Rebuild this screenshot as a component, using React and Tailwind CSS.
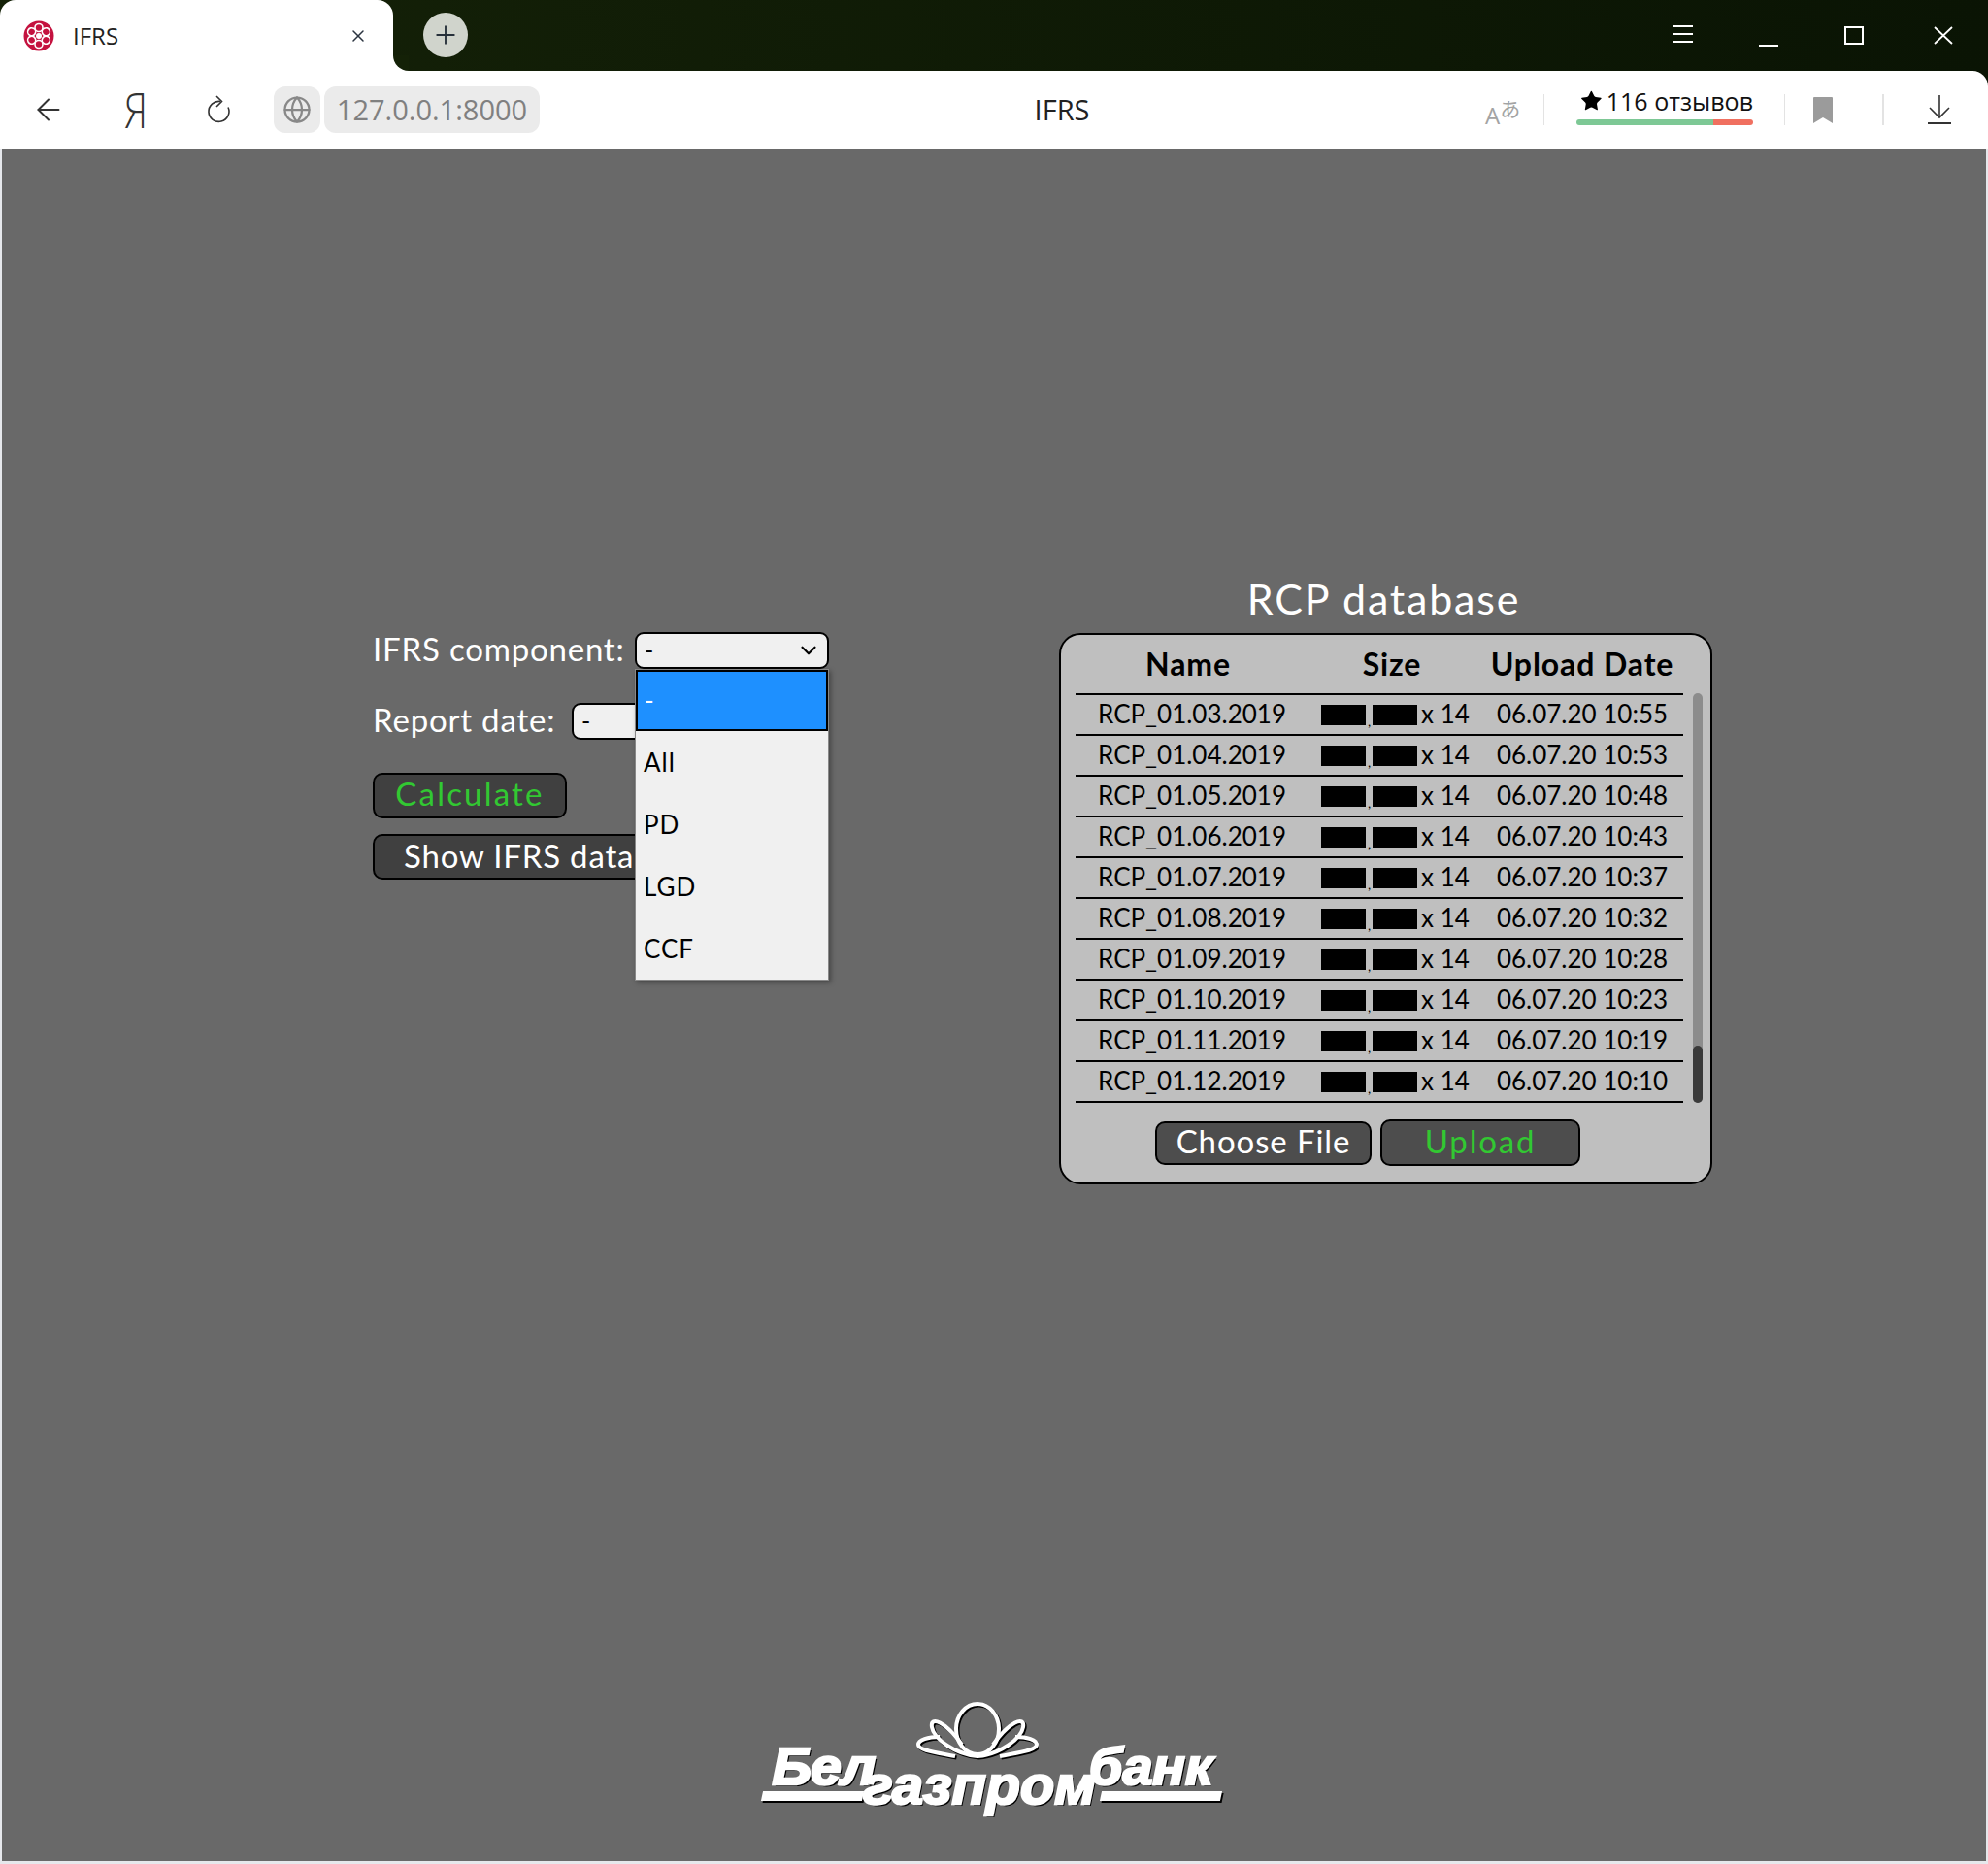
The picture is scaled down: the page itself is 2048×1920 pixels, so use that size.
import React from 'react';
import { ArrowLeft, ChevronDown, Globe, Plus, Star, X } from 'lucide-react';

const rows = [
  ['RCP_01.03.2019', '06.07.20 10:55'],
  ['RCP_01.04.2019', '06.07.20 10:53'],
  ['RCP_01.05.2019', '06.07.20 10:48'],
  ['RCP_01.06.2019', '06.07.20 10:43'],
  ['RCP_01.07.2019', '06.07.20 10:37'],
  ['RCP_01.08.2019', '06.07.20 10:32'],
  ['RCP_01.09.2019', '06.07.20 10:28'],
  ['RCP_01.10.2019', '06.07.20 10:23'],
  ['RCP_01.11.2019', '06.07.20 10:19'],
  ['RCP_01.12.2019', '06.07.20 10:10'],
];

const options = ['All', 'PD', 'LGD', 'CCF'];

function Favicon() {
  return (
    <svg width="32" height="32" viewBox="0 0 32 32">
      <circle cx="16" cy="16" r="15.5" fill="#c4123f" />
      {[0, 60, 120, 180, 240, 300].map((a) => (
        <circle key={a} cx="16" cy="7.5" r="4" fill="none" stroke="#fff" strokeWidth="1.6" transform={`rotate(${a} 16 16)`} />
      ))}
      <circle cx="16" cy="16" r="3" fill="#fff" />
    </svg>
  );
}

function TitleBar() {
  return (
    <div className="flex h-[73px] bg-gradient-to-r from-[#152208] to-[#0a1404]">
      <div className="flex w-[405px] items-center rounded-t-[16px] bg-white pl-[24px] pr-[26px]">
        <Favicon />
        <span className="ml-[19px] flex-1 text-[24px] text-[#222]">IFRS</span>
        <X size={20} strokeWidth={1.8} className="text-[#2b3440]" />
      </div>
      <div className="relative flex-1">
        {/* esquina arredondada por baixo do separador */}
        <div className="absolute bottom-0 left-0 h-[16px] w-[16px] bg-white">
          <div className="h-full w-full rounded-bl-[16px] bg-[#142107]" />
        </div>
        <div className="ml-[31px] mt-[13px] flex h-[46px] w-[46px] items-center justify-center rounded-full bg-[#d0d4cc]">
          <Plus size={30} strokeWidth={1.5} className="text-[#26303a]" />
        </div>
      </div>
      <div className="flex items-center pb-[1px]">
        <svg width="20" height="18" viewBox="0 0 20 18" className="mr-[68px] mb-[2px]">
          <path d="M0 1h20M0 9h20M0 17h20" stroke="#fff" strokeWidth="2" />
        </svg>
        <svg width="20" height="2" viewBox="0 0 20 2" className="mr-[68px] mt-[21px]">
          <path d="M0 1h20" stroke="#fff" strokeWidth="2" />
        </svg>
        <svg width="20" height="19" viewBox="0 0 20 19" className="mr-[72px]">
          <rect x="1" y="1" width="18" height="17" fill="none" stroke="#fff" strokeWidth="2" />
        </svg>
        <svg width="20" height="19" viewBox="0 0 20 19" className="mr-[36px]">
          <path d="M1 1l18 17M19 1L1 18" stroke="#fff" strokeWidth="1.8" />
        </svg>
      </div>
    </div>
  );
}

function ToolBar() {
  return (
    <div className="flex h-[80px] items-center rounded-tr-[16px] bg-white font-['Open_Sans',sans-serif]">
      <ArrowLeft size={36} strokeWidth={1.3} className="ml-[32px] text-[#333]" />
      <span className="ml-[60px] w-[24px] origin-left scale-x-[0.8] text-[50px] font-light leading-none text-[#333]">Я</span>
      <svg width="26" height="30" viewBox="0 0 26 30" className="ml-[60px]">
        <path d="M15 6.5a10.5 10.5 0 1 0 8 6" fill="none" stroke="#333" strokeWidth="1.6" />
        <path d="M11 1l5.5 5.5L11 12" fill="none" stroke="#333" strokeWidth="1.6" />
      </svg>
      <div className="ml-[44px] flex h-[48px] w-[48px] items-center justify-center rounded-[12px] bg-[#ebebeb]">
        <Globe size={30} strokeWidth={1.8} className="text-[#888]" />
      </div>
      <div className="ml-[4px] flex h-[48px] w-[222px] items-center justify-center rounded-[12px] bg-[#ebebeb] text-[29px] text-[#808080]">
        127.0.0.1:8000
      </div>
      <div className="ml-[480px] w-[116px] text-center text-[29px] text-[#222]">IFRS</div>
      <div className="ml-[378px] flex h-[36px] w-[36px] items-end text-[#a3a3a3]">
        <span className="text-[24px] leading-none">A</span>
        <span className="mb-[9px] font-['Noto_Sans_CJK_JP',sans-serif] text-[21px] leading-none">あ</span>
      </div>
      <div className="ml-[24px] h-[32px] w-[1px] bg-[#e3e3e3]" />
      <div className="mb-[9px] ml-[33px] flex w-[182px] flex-col">
        <div className="flex items-center pl-[3px] text-[25px] leading-[32px] text-[#111]">
          <Star size={28} fill="#000" strokeWidth={0} className="mr-[3px]" />
          <span className="whitespace-nowrap">116 отзывов</span>
        </div>
        <div className="mt-[3px] flex h-[6px] overflow-hidden rounded-[3px]">
          <div className="w-[141px] bg-[#7dc895]" />
          <div className="flex-1 bg-[#f07060]" />
        </div>
      </div>
      <div className="ml-[32px] h-[32px] w-[1px] bg-[#e3e3e3]" />
      <svg width="20" height="27" viewBox="0 0 20 27" className="ml-[29px]">
        <path d="M1 0h18a1 1 0 0 1 1 1v26l-10-6-10 6V1a1 1 0 0 1 1-1z" fill="#9b9b9b" />
      </svg>
      <div className="ml-[51px] h-[32px] w-[2px] bg-[#e3e3e3]" />
      <svg width="26" height="30" viewBox="0 0 26 30" className="ml-[44px]">
        <path d="M13 0v23M3 13l10 10 10-10" fill="none" stroke="#333" strokeWidth="1.6" />
        <path d="M1 29h24" stroke="#333" strokeWidth="2" />
      </svg>
    </div>
  );
}

function FormSelect({ width, chevron }) {
  return (
    <div className={`flex h-[38px] items-center justify-between rounded-[9px] border-2 border-black bg-[#f0f0f0] pl-[8px] pr-[6px] text-[25px] tracking-normal text-black ${width}`}>
      <span>-</span>
      {chevron && <ChevronDown size={26} strokeWidth={2} />}
    </div>
  );
}

function Dropdown() {
  return (
    <div className="absolute left-[270px] top-[38px] z-10 w-[200px] border border-[#888] bg-[#f0f0f0] text-[26px] tracking-[1px] text-black shadow-[2px_2px_5px_rgba(0,0,0,0.35)]">
      <div className="flex h-[63px] items-center border-2 border-black bg-[#1e90ff] pl-[7px] text-white">-</div>
      {options.map((o) => (
        <div key={o} className="flex h-[64px] items-center pl-[8px]">{o}</div>
      ))}
    </div>
  );
}

function FormColumn() {
  return (
    <div className="relative ml-[382px] mt-[58px] w-[707px] text-[33px] tracking-[0.8px] text-white">
      <div className="flex h-[38px] items-center">
        <span className="mb-[3px] w-[270px] whitespace-nowrap">IFRS component:</span>
        <FormSelect width="w-[200px]" chevron />
      </div>
      <div className="mt-[35px] flex h-[38px] items-center">
        <span className="mb-[3px] w-[205px] whitespace-nowrap">Report date:</span>
        <FormSelect width="w-[120px]" />
      </div>
      <Dropdown />
      <button className="mt-[34px] block h-[47px] w-[200px] rounded-[10px] border-2 border-black bg-[#404040] pb-[5px] leading-none tracking-[2.2px] text-[#32c832]">Calculate</button>
      <button className="mt-[16px] block h-[47px] w-[290px] rounded-[10px] border-2 border-black bg-[#404040] pb-[3px] pl-[30px] text-left leading-none">Show IFRS data</button>
    </div>
  );
}

function Database() {
  return (
    <div className="w-[673px]">
      <div className="h-[48px] pr-[4px] text-center text-[43px] leading-[48px] tracking-[1.8px] text-white">RCP database</div>
      <div className="mt-[11px] h-[568px] rounded-[22px] border-2 border-black bg-[#bfbfbf] pl-[15px] text-black">
        <div className="grid h-[60px] w-[626px] grid-cols-[240px_178px_208px] items-center text-center text-[32px] font-bold tracking-[0.9px]">
          <div className="pr-[8px]">Name</div>
          <div className="pr-[6px]">Size</div>
          <div className="whitespace-nowrap">Upload Date</div>
        </div>
        <div className="flex">
          <div className="w-[626px] border-b-2 border-black">
            {rows.map(([name, date]) => (
              <div key={name} className="grid h-[42px] grid-cols-[240px_178px_208px] items-center border-t-2 border-black pb-[4px] text-center text-[26px]">
                <div className="whitespace-nowrap">{name}</div>
                <div className="flex items-center justify-center whitespace-nowrap pl-[1px]">
                  <span className="mt-[1px] h-[21px] w-[46px] bg-black" />
                  <span className="mt-[14px] w-[7px] text-[14px] leading-none">,</span>
                  <span className="mt-[1px] h-[21px] w-[46px] bg-black" />
                  <span className="ml-[4px]">x 14</span>
                </div>
                <div className="whitespace-nowrap">{date}</div>
              </div>
            ))}
          </div>
          <div className="ml-[10px] flex h-[422px] w-[10px] flex-col justify-end rounded-full bg-[#8c8c8c]">
            <div className="h-[59px] rounded-full bg-[#3a3a3a]" />
          </div>
        </div>
        <div className="mt-[17px] flex items-center pl-[82px] text-[33px]">
          <button className="h-[45px] w-[223px] rounded-[10px] border-2 border-black bg-[#4d4d4d] pb-[4px] leading-none tracking-[0.9px] text-white">Choose File</button>
          <button className="ml-[9px] h-[48px] w-[206px] rounded-[10px] border-2 border-black bg-[#4d4d4d] pb-[4px] leading-none tracking-[1.8px] text-[#32c832]">Upload</button>
        </div>
      </div>
    </div>
  );
}

function Logo() {
  return (
    <div className="ml-[783px] w-[480px] select-none italic text-white">
      <svg width="126" height="62" viewBox="0 0 126 62" className="ml-[159px] block">
        <g fill="none" stroke="#000" strokeWidth="4" transform="translate(1.5 1.5)">
          <ellipse cx="63" cy="28" rx="22" ry="26" />
          <path d="M47 44C30 20 14 14 16 26c2 12 24 28 47 30 23-2 45-18 47-30 2-12-14-6-31 18" />
          <path d="M40 56C20 52 2 50 2 44c0-5 10-8 22-8M86 56c20-4 38-6 38-12 0-5-10-8-22-8" />
        </g>
        <g fill="none" stroke="#fff" strokeWidth="4">
          <ellipse cx="63" cy="28" rx="22" ry="26" />
          <path d="M47 44C30 20 14 14 16 26c2 12 24 28 47 30 23-2 45-18 47-30 2-12-14-6-31 18" />
          <path d="M40 56C20 52 2 50 2 44c0-5 10-8 22-8M86 56c20-4 38-6 38-12 0-5-10-8-22-8" />
        </g>
      </svg>
      <div className="-mt-[12px] flex font-['Liberation_Sans',sans-serif] font-bold [-webkit-text-stroke:2.5px_white] [text-shadow:2px_2px_0_#000]">
        <div className="w-[104px]">
          <div className="h-[42px] origin-left scale-x-[1.06] pl-[10px] text-[54px] leading-[32px] tracking-[-1px]">Бел</div>
          <div className="h-[10px] -skew-x-12 bg-white shadow-[2px_2px_0_#000]" />
        </div>
        <div className="mt-[19px] w-[233px] origin-left scale-x-[1.03] text-[56px] leading-[34px]">газпром</div>
        <div className="w-[136px]">
          <div className="h-[42px] origin-left scale-x-[1.03] text-[54px] leading-[32px]">банк</div>
          <div className="ml-[12px] h-[10px] -skew-x-12 bg-white shadow-[2px_2px_0_#000]" />
        </div>
      </div>
    </div>
  );
}

export default function App() {
  return (
    <div className="flex h-[1920px] w-[2048px] flex-col overflow-hidden bg-[#e6e8ec] font-['Lato',sans-serif]">
      <div className="bg-white font-['Open_Sans',sans-serif]">
        <TitleBar />
      </div>
      <div className="bg-gradient-to-r from-[#152208] to-[#0a1404]">
        <ToolBar />
      </div>
      <main className="mx-[2px] mb-[3px] flex flex-1 flex-col bg-[#696969] pt-[440px]">
        <div className="flex items-start">
          <FormColumn />
          <Database />
        </div>
        <div className="mt-auto pb-[61px]">
          <Logo />
        </div>
      </main>
    </div>
  );
}
